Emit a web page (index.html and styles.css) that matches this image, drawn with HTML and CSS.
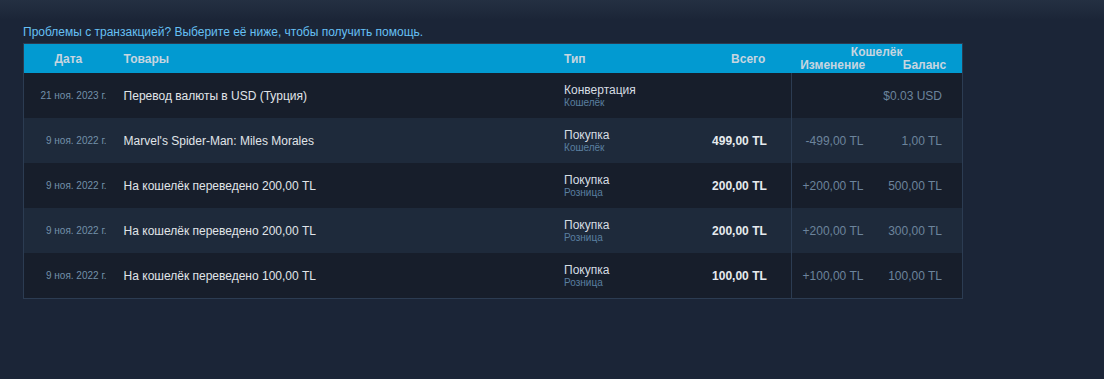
FILE: index.html
```html
<!DOCTYPE html>
<html lang="ru">
<head>
<meta charset="utf-8">
<link rel="stylesheet" href="styles.css">
</head>
<body>
<div class="topshade"></div>
<div class="page">
  <p class="help">Проблемы с транзакцией? Выберите её ниже, чтобы получить помощь.</p>
  <table class="wht">
    <colgroup>
      <col class="c-date"><col class="c-items"><col class="c-type"><col class="c-total"><col class="c-change"><col class="c-bal">
    </colgroup>
    <thead>
      <tr>
        <th class="h-date">Дата</th>
        <th class="h-items">Товары</th>
        <th class="h-type">Тип</th>
        <th class="h-total">Всего</th>
        <th class="h-wallet" colspan="2">
          <div class="wallet-title">Кошелёк</div>
          <div class="wallet-sub"><span class="ws-change">Изменение</span><span class="ws-bal">Баланс</span></div>
        </th>
      </tr>
    </thead>
    <tbody>
      <tr class="odd">
        <td class="date">21 ноя. 2023 г.</td>
        <td class="items">Перевод валюты в USD (Турция)</td>
        <td class="type"><div>Конвертация</div><div class="pm">Кошелёк</div></td>
        <td class="total"></td>
        <td class="change"></td>
        <td class="bal">$0.03 USD</td>
      </tr>
      <tr class="even">
        <td class="date">9 ноя. 2022 г.</td>
        <td class="items">Marvel's Spider-Man: Miles Morales</td>
        <td class="type"><div>Покупка</div><div class="pm">Кошелёк</div></td>
        <td class="total">499,00 TL</td>
        <td class="change">-499,00 TL</td>
        <td class="bal">1,00 TL</td>
      </tr>
      <tr class="odd">
        <td class="date">9 ноя. 2022 г.</td>
        <td class="items">На кошелёк переведено 200,00 TL</td>
        <td class="type"><div>Покупка</div><div class="pm">Розница</div></td>
        <td class="total">200,00 TL</td>
        <td class="change">+200,00 TL</td>
        <td class="bal">500,00 TL</td>
      </tr>
      <tr class="even">
        <td class="date">9 ноя. 2022 г.</td>
        <td class="items">На кошелёк переведено 200,00 TL</td>
        <td class="type"><div>Покупка</div><div class="pm">Розница</div></td>
        <td class="total">200,00 TL</td>
        <td class="change">+200,00 TL</td>
        <td class="bal">300,00 TL</td>
      </tr>
      <tr class="odd">
        <td class="date">9 ноя. 2022 г.</td>
        <td class="items">На кошелёк переведено 100,00 TL</td>
        <td class="type"><div>Покупка</div><div class="pm">Розница</div></td>
        <td class="total">100,00 TL</td>
        <td class="change">+100,00 TL</td>
        <td class="bal">100,00 TL</td>
      </tr>
    </tbody>
  </table>
</div>
</body>
</html>
```
FILE: styles.css
```css
html, body {
  margin: 0;
  padding: 0;
}
body {
  background: #1b2537;
  font-family: "Liberation Sans", Arial, sans-serif;
  font-size: 12px;
  color: #c6d4df;
  height: 379px;
  overflow: hidden;
  position: relative;
}
.topshade {
  position: absolute;
  left: 0; top: 0; right: 0;
  height: 20px;
  background: linear-gradient(to bottom, #243042, rgba(27,37,55,0));
  pointer-events: none;
}
.page {
  padding: 25px 0 0 23px;
  width: 940px;
  position: relative;
}
.help {
  margin: 0 0 3px 0;
  color: #66c0f4;
  font-size: 12px;
  line-height: 15px;
}
.wht {
  width: 940px;
  border-collapse: collapse;
  table-layout: fixed;
  border: 1px solid #2c3c52;
}
.c-date { width: 92px; }
.c-items { width: 440px; }
.c-type { width: 124px; }
.c-total { width: 111px; }
.c-change { width: 89px; }
.c-bal { width: 82px; }
thead th {
  background: #029ad1;
  color: #c7d5e0;
  font-weight: bold;
  font-size: 12px;
  height: 28px;
  padding: 0;
  vertical-align: middle;
  line-height: 14px;
}
.h-date { text-align: center; padding-right: 3px; }
.h-items { text-align: left; padding-left: 8px; }
.h-type { text-align: left; padding-left: 8px; }
.h-total { text-align: right; padding-right: 26px; }
.h-wallet { text-align: center; padding-top: 1px; }
.wallet-title { line-height: 12px; }
.wallet-sub {
  display: grid;
  grid-template-columns: 89px 82px;
  line-height: 14px;
}
.ws-change { text-align: right; padding-right: 15px; }
.ws-bal { text-align: right; padding-right: 16px; }
tbody td {
  height: 45px;
  padding: 0;
  vertical-align: middle;
}
tr.odd { background: #171e2b; }
tr.even { background: #1e2a3b; }
.date {
  text-align: right;
  padding-right: 9px;
  font-size: 10px;
  color: #7390a9;
}
.items {
  padding-left: 8px;
  color: #e0e5e9;
  font-size: 12px;
}
.type {
  padding-left: 8px;
  color: #d6dde3;
  font-size: 12px;
  line-height: 13px;
}
.type .pm {
  font-size: 10px;
  line-height: 11px;
  color: #5a7fa0;
}
.total {
  text-align: right;
  padding-right: 24px;
  font-weight: bold;
  color: #e6eaee;
}
.change {
  text-align: right;
  padding-right: 17px;
  border-left: 1px solid #2c3c52;
  color: #6c849c;
}
.bal {
  text-align: right;
  padding-right: 20px;
  color: #6c849c;
}
```
